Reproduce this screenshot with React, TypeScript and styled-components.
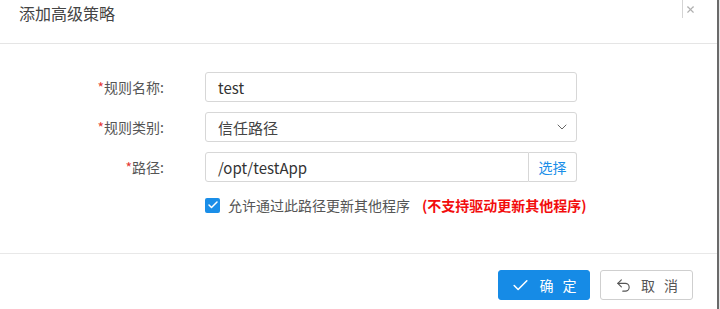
import React from "react";
import styled, { createGlobalStyle } from "styled-components";
import { Check, Undo2, ChevronDown, X } from "lucide-react";

const Global = createGlobalStyle`
  html, body { margin: 0; padding: 0; background: #fff; }
  body { font-family: "Noto Sans CJK SC", "Noto Sans", sans-serif; color: #333; }
`;

const Page = styled.div`
  display: flex;
  width: 720px;
  height: 309px;
  overflow: hidden;
`;

const Dialog = styled.div`
  width: 717px;
  display: flex;
  flex-direction: column;
  background: #fff;
`;

const Edge = styled.div`
  width: 3px;
  border-left: 2px solid #6a6a6a;
  background: #e6e6e6;
  box-sizing: border-box;
`;

const Header = styled.div`
  height: 43px;
  border-bottom: 1px solid #e5e5e5;
  display: flex;
  align-items: flex-start;
  justify-content: space-between;
  padding-left: 19px;
  box-sizing: content-box;
  position: relative;
`;

const Title = styled.div`
  font-size: 16px;
  line-height: 27px;
  color: #444;
`;

const Close = styled.div`
  position: absolute;
  left: 682px;
  top: 0;
  height: 18px;
  border-left: 1px solid #d4d4d4;
  padding-left: 2px;
  display: flex;
  align-items: center;
  color: #b0b0b0;
`;

const Body = styled.div`
  height: 210px;
  padding-top: 28px;
  box-sizing: border-box;
  border-bottom: 1px solid #e8e8e8;
`;

const Form = styled.div`
  display: grid;
  grid-template-columns: 164px 372px;
  column-gap: 41px;
  row-gap: 10px;
  align-items: center;
`;

const Label = styled.div`
  font-size: 14px;
  color: #555;
  text-align: right;
  line-height: 30px;
`;

const Star = styled.span`
  color: #e53935;
`;

const Field = styled.div`
  height: 30px;
  border: 1px solid #d7d7d7;
  border-radius: 3px;
  box-sizing: border-box;
  display: flex;
  align-items: center;
  padding-left: 12px;
  font-size: 15px;
  color: #333;
`;

const SelectField = styled(Field)`
  justify-content: space-between;
  padding-right: 6px;
  color: #444;
`;

const Group = styled.div`
  display: flex;
  height: 30px;
`;

const GroupInput = styled(Field)`
  flex: 1;
  border-radius: 3px 0 0 3px;
`;

const Addon = styled.div`
  width: 48px;
  height: 30px;
  box-sizing: border-box;
  border: 1px solid #d7d7d7;
  border-left: none;
  border-radius: 0 3px 3px 0;
  display: flex;
  align-items: center;
  justify-content: center;
  color: #1a8ee8;
  font-size: 14px;
`;

const CheckRow = styled.div`
  display: flex;
  align-items: center;
  margin-top: 13px;
  padding-left: 205px;
  font-size: 14px;
`;

const Box = styled.div`
  width: 15px;
  height: 15px;
  border-radius: 2px;
  background: #1a8ee8;
  display: flex;
  align-items: center;
  justify-content: center;
  color: #fff;
  margin-right: 8px;
`;

const CheckText = styled.span`
  color: #555;
`;

const Warn = styled.span`
  color: #f20d0d;
  font-weight: bold;
  margin-left: 12px;
`;

const Footer = styled.div`
  flex: 1;
  display: flex;
  justify-content: flex-end;
  align-items: flex-start;
  padding-top: 16px;
  padding-right: 24px;
  gap: 10px;
`;

const Button = styled.button<{ $primary?: boolean }>`
  width: ${(p) => (p.$primary ? "92px" : "93px")};
  height: 30px;
  border-radius: 3px;
  border: 1px solid ${(p) => (p.$primary ? "#168be6" : "#cfcfcf")};
  background: ${(p) => (p.$primary ? "#168be6" : "#fff")};
  color: ${(p) => (p.$primary ? "#fff" : "#555")};
  font-family: "Noto Sans CJK SC", sans-serif;
  font-size: 14px;
  letter-spacing: 3px;
  display: flex;
  align-items: center;
  justify-content: center;
  gap: 9px;
  padding: 0 0 0 3px;
  cursor: pointer;
  svg { flex: none; }
`;

export default function App() {
  return (
    <Page>
      <Global />
      <Dialog>
        <Header>
          <Title>添加高级策略</Title>
          <Close>
            <X size={11} strokeWidth={2.5} />
          </Close>
        </Header>
        <Body>
          <Form>
            <Label>
              <Star>*</Star>规则名称:
            </Label>
            <Field>test</Field>
            <Label>
              <Star>*</Star>规则类别:
            </Label>
            <SelectField>
              信任路径
              <ChevronDown size={16} strokeWidth={1.5} color="#666" />
            </SelectField>
            <Label>
              <Star>*</Star>路径:
            </Label>
            <Group>
              <GroupInput>/opt/testApp</GroupInput>
              <Addon>选择</Addon>
            </Group>
          </Form>
          <CheckRow>
            <Box>
              <Check size={12} strokeWidth={3} />
            </Box>
            <CheckText>允许通过此路径更新其他程序</CheckText>
            <Warn>(不支持驱动更新其他程序)</Warn>
          </CheckRow>
        </Body>
        <Footer>
          <Button $primary>
            <Check size={19} strokeWidth={2} />
            确 定
          </Button>
          <Button>
            <Undo2 size={17} strokeWidth={1.6} />
            取 消
          </Button>
        </Footer>
      </Dialog>
      <Edge />
    </Page>
  );
}
